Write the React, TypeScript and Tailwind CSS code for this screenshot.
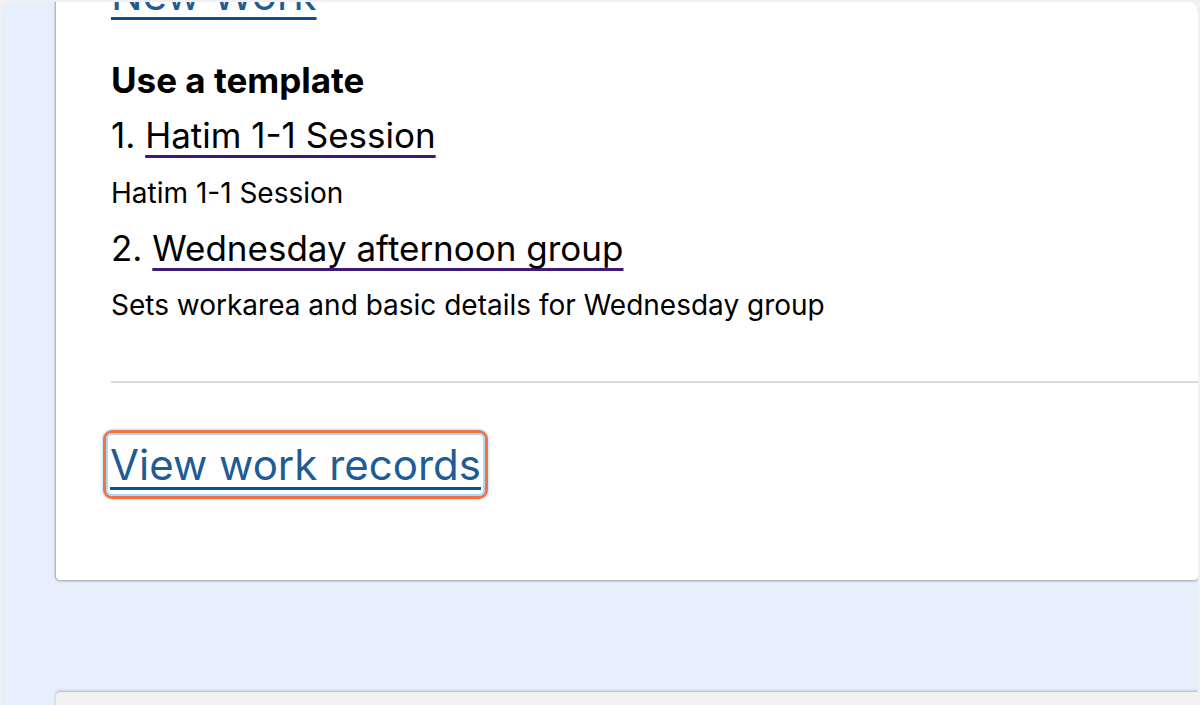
import React from "react";

export default function App() {
  const font = { fontFamily: "Inter, 'Noto Sans', sans-serif" };
  return (
    <div className="w-[1200px] h-[705px] overflow-hidden bg-[#f0f0f5] pt-[2px] pr-[2px] pl-[1px]" style={font}>
      <div className="h-[703px] rounded-tl-[10px] rounded-tr-[10px] bg-[#e8effc] overflow-hidden">
        <div className="ml-[55px] mt-[-52px] bg-white rounded-b-[4px] shadow-[0_1px_3px_rgba(0,0,0,0.3),-1px_0_2px_rgba(0,0,0,0.2)] pl-[55px] pt-[20px] h-[630px]">
          <div className="text-[42px] leading-[50px]">
            <a className="text-[#1f5c96] underline decoration-[3px] underline-offset-[7px] decoration-[#0d4f8c] [text-decoration-skip-ink:none]">New Work</a>
          </div>
          <h3 className="mt-[39px] text-[35px] leading-[42px] font-bold text-black">Use a template</h3>
          <div className="mt-[13px] text-[35px] leading-[42px] text-black">
            1. <a className="underline decoration-[3px] underline-offset-[7px] decoration-[#3d1a78] [text-decoration-skip-ink:none]">Hatim 1-1 Session</a>
          </div>
          <p className="mt-[20px] text-[28px] leading-[34px] text-black">Hatim 1-1 Session</p>
          <div className="mt-[17px] text-[35px] leading-[42px] text-black">
            2. <a className="underline decoration-[3px] underline-offset-[7px] decoration-[#3d1a78] [text-decoration-skip-ink:none]">Wednesday afternoon group</a>
          </div>
          <p className="mt-[19px] text-[28px] leading-[34px] text-black">Sets workarea and basic details for Wednesday group</p>
          <div className="mt-[59px] h-[2px] bg-[#dadada]" />
          <div className="mt-[47px] flex">
            <div className="-ml-[8px] rounded-[9px] border-[3px] border-[#f47240] shadow-[0_0_2px_1px_rgba(140,210,245,0.6)]">
              <a className="block rounded-[6px] border-2 border-[#a8dcf5] bg-white pl-[2px] pr-[2px] text-[42px] leading-[59px] text-[#1f5c96] underline decoration-[3px] underline-offset-[7px] decoration-[#0d4f8c] [text-decoration-skip-ink:none]">View work records</a>
            </div>
          </div>
        </div>
        <div className="ml-[55px] mt-[112px] h-[40px] bg-[#f1f1f1] shadow-[0_-1px_3px_rgba(0,0,0,0.25)] rounded-tl-[4px]" />
      </div>
    </div>
  );
}
